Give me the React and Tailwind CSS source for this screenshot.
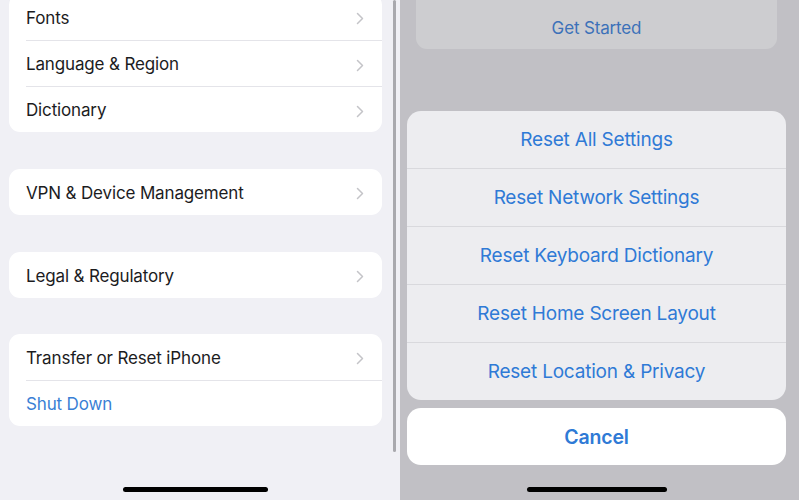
import React from "react";

const font = { fontFamily: "Inter, 'Noto Sans', sans-serif" };

const Chevron = () => (
  <svg width="8" height="13" viewBox="0 0 8 13" fill="none" className="shrink-0">
    <polyline
      points="1.5,1.5 6.5,6.5 1.5,11.5"
      stroke="#c4c4c8"
      strokeWidth="1.5"
      strokeLinecap="round"
      strokeLinejoin="round"
    />
  </svg>
);

const Row = ({ label, first, chevron = true, blue = false }) => (
  <div className="pl-[17px]">
    <div
      className={`flex items-center justify-between pr-[18px] pt-[3px] h-[46px] ${
        first ? "" : "border-t border-[#e4e4e9]"
      }`}
    >
      <span
        className={`text-[17px] tracking-[-0.15px] ${
          blue ? "text-[#3a7fd5]" : "text-[#1c1c1e]"
        }`}
      >
        {label}
      </span>
      {chevron && <Chevron />}
    </div>
  </div>
);

const Card = ({ children, className = "" }) => (
  <div className={`w-[373px] bg-white rounded-[11px] overflow-hidden ${className}`}>
    {children}
  </div>
);

const sheetItems = [
  "Reset All Settings",
  "Reset Network Settings",
  "Reset Keyboard Dictionary",
  "Reset Home Screen Layout",
  "Reset Location & Privacy",
];

export default function App() {
  return (
    <div className="flex w-[799px] h-[500px] overflow-hidden" style={font}>
      {/* left: settings list */}
      <div className="relative w-[400px] h-full bg-[#f0f0f5] overflow-hidden">
        <div className="flex flex-col pl-[9px] mt-[-6px]">
          <Card>
            <Row label="Fonts" first />
            <Row label="Language & Region" />
            <Row label="Dictionary" />
          </Card>
          <Card className="mt-[37px]">
            <Row label="VPN & Device Management" first />
          </Card>
          <Card className="mt-[37px]">
            <Row label="Legal & Regulatory" first />
          </Card>
          <Card className="mt-[36px]">
            <Row label="Transfer or Reset iPhone" first />
            <Row label="Shut Down" chevron={false} blue />
          </Card>
        </div>
        {/* scroll indicator */}
        <div className="absolute left-[393px] top-0 w-[3px] h-[452px] rounded-full bg-[#a9a9ae]" />
        {/* home indicator */}
        <div className="absolute left-[123px] top-[487px] w-[145px] h-[5px] rounded-full bg-black" />
      </div>

      {/* right: action sheet */}
      <div className="relative w-[399px] h-full bg-[#c1c0c5] overflow-hidden">
        <div className="flex flex-col">
          <div className="ml-[16px] w-[361px] h-[80px] mt-[-31px] rounded-[11px] bg-[#cdcdd0] flex items-end justify-center pb-[8px]">
            <span className="text-[17px] text-[#3c71b9] tracking-[-0.15px]">Get Started</span>
          </div>
          <div className="ml-[7px] mt-[62px] w-[379px] rounded-[14px] bg-[#ededf0] overflow-hidden">
            {sheetItems.map((item, i) => (
              <div
                key={item}
                className={`flex items-center justify-center pt-[2px] ${
                  i === 0 ? "h-[57px]" : "h-[58px] border-t border-[#d9d9dd]"
                }`}
              >
                <span className="text-[19px] text-[#2f7ad6] tracking-[-0.2px]">{item}</span>
              </div>
            ))}
          </div>
          <div className="ml-[7px] mt-[8px] w-[379px] h-[57px] rounded-[14px] bg-white flex items-center justify-center pt-[2px]">
            <span className="text-[19.5px] font-semibold text-[#2f7ad6] tracking-[-0.2px]">Cancel</span>
          </div>
        </div>
        <div className="absolute left-[127px] top-[487px] w-[140px] h-[5px] rounded-full bg-black" />
      </div>
    </div>
  );
}
